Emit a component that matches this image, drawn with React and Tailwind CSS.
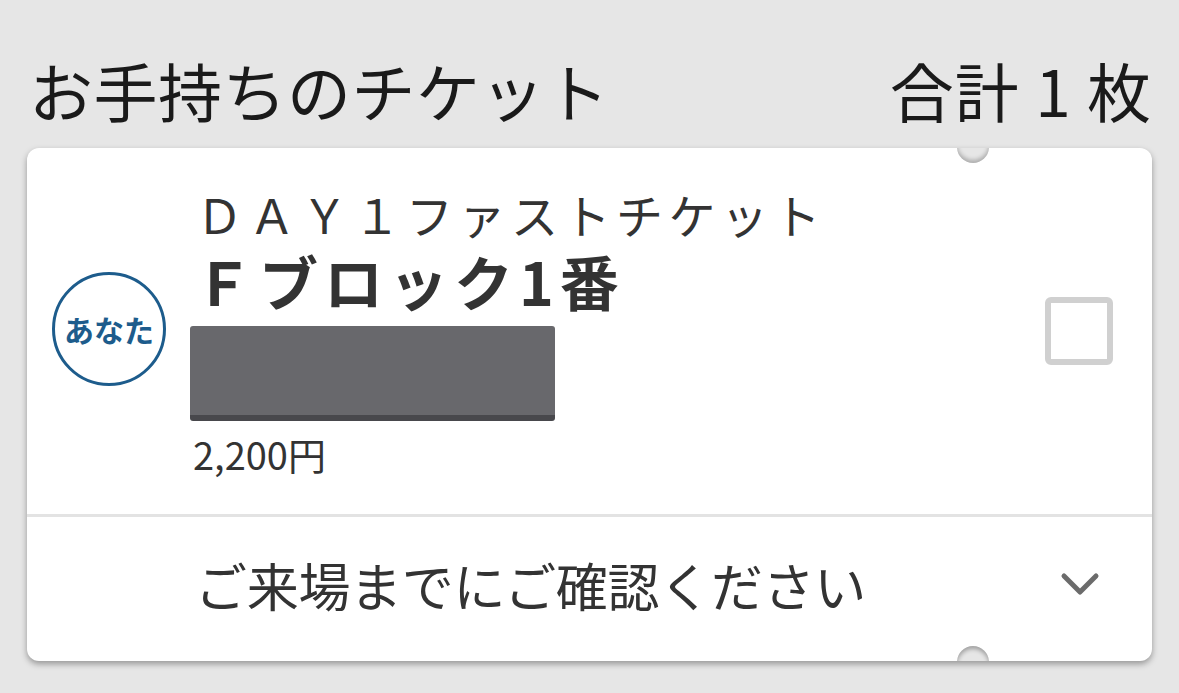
export default function App() {
  const font = { fontFamily: '"Noto Sans CJK JP", "Noto Sans", sans-serif' };
  return (
    <div className="w-[1179px] h-[693px] bg-[#e6e6e6] overflow-hidden" style={font}>
      <div className="flex justify-between items-center pl-[29px] pr-[27px] pt-[50px] h-[148px] pb-[20px]">
        <div className="text-[64px] leading-[76px] text-[#1a1a1a] tracking-[0.5px]">お手持ちのチケット</div>
        <div className="text-[64px] leading-[76px] text-[#1a1a1a] tracking-[1px]">合計 1 枚</div>
      </div>
      <div className="relative mx-[27px] h-[513px] bg-white rounded-[12px] shadow-[0_3px_6px_rgba(0,0,0,0.35)] flex flex-col overflow-hidden">
        <div className="absolute left-[930px] top-[-17px] w-[32px] h-[32px] rounded-full bg-[#e6e6e6] shadow-[inset_0_-3px_4px_rgba(0,0,0,0.25)]"></div>
        <div className="absolute left-[930px] bottom-[-17px] w-[32px] h-[32px] rounded-full bg-[#e6e6e6] shadow-[inset_0_3px_4px_rgba(0,0,0,0.3)]"></div>
        <div className="h-[366px] flex items-center pl-[25px] pr-[39px]">
          <div className="w-[114px] h-[114px] rounded-full border-[3px] border-[#1d5c8c] flex items-center justify-center shrink-0 mt-[-4px]">
            <span className="text-[30px] font-bold text-[#1d5c8c] leading-none">あなた</span>
          </div>
          <div className="flex flex-col ml-[24px] flex-1 self-start mt-[38px]">
            <div className="text-[47px] leading-[56px] text-[#333] tracking-[5.5px] pl-[6px]">ＤＡＹ１ファストチケット</div>
            <div className="text-[59px] leading-[66px] font-bold text-[#333] pl-[4px] mt-[6px] tracking-[6px]">Ｆブロック1番</div>
            <div className="w-[365px] h-[95px] rounded-[3px] bg-[#68686c] border-b-[6px] border-[#48484c] mt-[12px]"></div>
            <div className="text-[38px] leading-[46px] text-[#333] pl-[3px] mt-[10px]">2,200円</div>
          </div>
          <div className="w-[68px] h-[68px] rounded-[6px] border-[6px] border-[#d0d0d0] shrink-0"></div>
        </div>
        <div className="h-[3px] bg-[#e3e3e3]"></div>
        <div className="flex-1 flex items-center pl-[168px] pr-[52px] justify-between">
          <div className="text-[52px] leading-[60px] text-[#333] mt-[-8px] tracking-[-0.3px]">ご来場までにご確認ください</div>
          <svg width="40" height="26" viewBox="0 0 40 26" className="mt-[-8px]">
            <path d="M4 4 L20 20 L36 4" fill="none" stroke="#6b6b6b" strokeWidth="5" strokeLinecap="round" strokeLinejoin="round" />
          </svg>
        </div>
      </div>
    </div>
  );
}
